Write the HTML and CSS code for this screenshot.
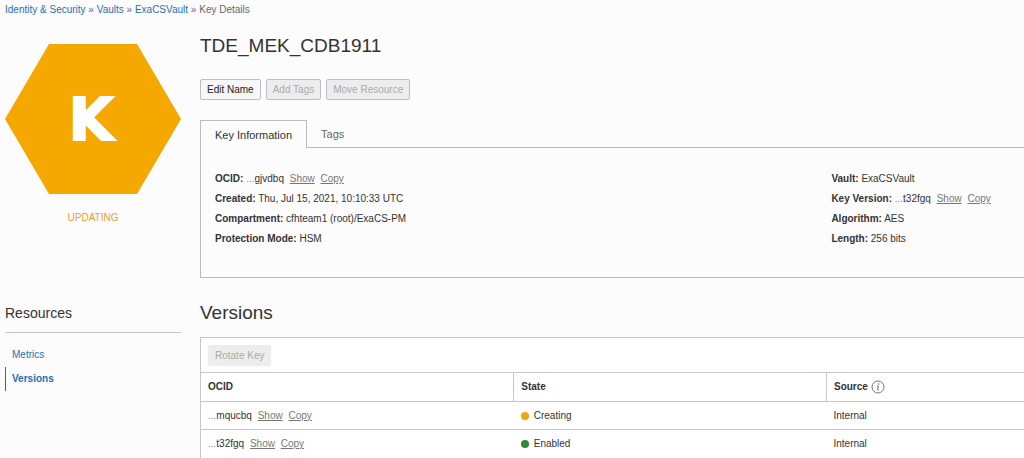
FILE: index.html
```
<!DOCTYPE html>
<html lang="en">
<head>
    <meta charset="UTF-8">
    <meta name="viewport" content="width=device-width, initial-scale=1.0">
    <title>Key Details</title>
    <link rel="stylesheet" href="styles.css">
</head>
<body>
    <nav class="breadcrumb">
        <a href="#">Identity &amp; Security</a> » <a href="#">Vaults</a> » <a href="#">ExaCSVault</a> » <span>Key Details</span>
    </nav>

    <div class="layout">
        <aside class="sidebar">
            <svg class="hexagon" viewBox="0 0 176 152">
                <polygon points="0,76 44,1 132,1 176,76 132,151 44,151" fill="#f5a800"/>
                <text class="hexagon-letter" x="86" y="97" text-anchor="middle">K</text>
            </svg>
            <div class="status">UPDATING</div>

            <h2 class="resources-title">Resources</h2>
            <ul class="resources">
                <li><a href="#">Metrics</a></li>
                <li class="active"><a href="#">Versions</a></li>
            </ul>
        </aside>

        <main class="content">
            <h1>TDE_MEK_CDB1911</h1>

            <div class="actions">
                <button type="button" class="btn">Edit Name</button>
                <button type="button" class="btn" disabled>Add Tags</button>
                <button type="button" class="btn" disabled>Move Resource</button>
            </div>

            <div class="tabs">
                <button type="button" class="tab selected">Key Information</button>
                <button type="button" class="tab">Tags</button>
            </div>
            <section class="panel">
                <div>
                    <p><b>OCID:</b> <span class="dots">...</span>gjvdbq <a href="#" class="mini">Show</a> <a href="#" class="mini">Copy</a></p>
                    <p><b>Created:</b> Thu, Jul 15, 2021, 10:10:33 UTC</p>
                    <p><b>Compartment:</b> cfhteam1 (root)/ExaCS-PM</p>
                    <p><b>Protection Mode:</b> HSM</p>
                </div>
                <div>
                    <p><b>Vault:</b> ExaCSVault</p>
                    <p><b>Key Version:</b> <span class="dots">...</span>t32fgq <a href="#" class="mini">Show</a> <a href="#" class="mini">Copy</a></p>
                    <p><b>Algorithm:</b> AES</p>
                    <p><b>Length:</b> 256 bits</p>
                </div>
            </section>

            <h2 class="versions-title">Versions</h2>
            <section class="versions">
                <div class="toolbar">
                    <button type="button" class="btn flat" disabled>Rotate Key</button>
                </div>
                <table>
                    <thead>
                        <tr>
                            <th class="col-wide">OCID</th>
                            <th class="col-wide">State</th>
                            <th>
                                <span class="with-icon">Source
                                    <svg class="info" viewBox="0 0 14 14">
                                        <circle cx="7" cy="7" r="6" fill="none" stroke="#777" stroke-width="1"/>
                                        <circle cx="7.6" cy="4" r="0.8" fill="#666"/>
                                        <path d="M6 6h1.4L6.5 9.8q0 .6 1.2 0" fill="none" stroke="#666" stroke-width="0.9"/>
                                    </svg>
                                </span>
                            </th>
                        </tr>
                    </thead>
                    <tbody>
                        <tr>
                            <td><span class="dots">...</span>mqucbq <a href="#" class="mini">Show</a> <a href="#" class="mini">Copy</a></td>
                            <td><span class="state creating">Creating</span></td>
                            <td>Internal</td>
                        </tr>
                        <tr>
                            <td><span class="dots">...</span>t32fgq <a href="#" class="mini">Show</a> <a href="#" class="mini">Copy</a></td>
                            <td><span class="state enabled">Enabled</span></td>
                            <td>Internal</td>
                        </tr>
                    </tbody>
                </table>
            </section>
        </main>
    </div>
</body>
</html>
```

FILE: styles.css
```
/* styles.css */
* {
    box-sizing: border-box;
}

body {
    margin: 0;
    padding-left: 5px;
    font-family: "Liberation Sans", Arial, sans-serif;
    font-size: 10px;
    line-height: 20px;
    color: #333;
    background-color: #fcfcfc;
}

h1, h2, p, ul {
    margin: 0;
    padding: 0;
    font-weight: normal;
}

a {
    color: #1f6fb8;
    text-decoration: none;
}

.breadcrumb {
    height: 20px;
    color: #666;
}

.layout {
    display: grid;
    grid-template-columns: 176px 1fr;
    gap: 19px;
}

/* sidebar */
.hexagon {
    display: block;
    width: 100%;
    margin-top: 23px;
}

.hexagon-letter {
    font-family: "DejaVu Sans", sans-serif;
    font-size: 58px;
    font-weight: bold;
    fill: #fff;
    stroke: #fff;
    stroke-width: 2px;
}

.status {
    margin-top: 13px;
    text-align: center;
    color: #eda02f;
}

.resources-title {
    margin-top: 75px;
    padding-bottom: 9px;
    border-bottom: 1px solid #c0c4cc;
    font-size: 14px;
}

.resources {
    margin-top: 10px;
    list-style: none;
}

.resources li {
    padding-left: 6px;
    border-left: 1px solid transparent;
    line-height: 24px;
}

.resources .active {
    border-left-color: #1f6fb8;
    font-weight: bold;
}

/* main column */
h1, .versions-title {
    font-size: 19px;
    line-height: 24px;
}

h1 {
    margin-top: 14px;
}

.actions {
    display: flex;
    gap: 5px;
    margin-top: 21px;
}

.btn {
    height: 21px;
    padding: 0 6px;
    border: 1px solid #bbbec4;
    border-radius: 2px;
    background-color: #f6f7f8;
    font: inherit;
    line-height: 18px;
    color: #222;
}

.btn:disabled {
    background-color: #ededee;
    color: #aaa;
}

.btn.flat {
    border-color: #ededee;
}

.tabs {
    display: flex;
    margin-top: 20px;
    border-bottom: 1px solid #bbb;
}

.tab {
    height: 27px;
    padding: 0 14px;
    border: 0;
    background: none;
    font: inherit;
    font-size: 11px;
    color: #666;
}

.tab.selected {
    height: 28px;
    margin-bottom: -1px;
    border: 1px solid #bbb;
    border-bottom: 0;
    background-color: #fcfcfc;
    color: #333;
}

.panel {
    display: grid;
    grid-template-columns: 16fr 5fr;
    padding: 21px 0 28px 14px;
    border: 1px solid #bbb;
    border-width: 0 0 1px 1px;
}

.dots {
    color: #888;
}

.mini {
    margin-left: 3px;
    color: #777;
    text-decoration: underline;
}

.versions-title {
    margin-top: 23px;
}

.versions {
    margin-top: 12px;
    border: 1px solid #c4c8c8;
    border-width: 1px 0 0 1px;
    background-color: #fff;
}

.toolbar {
    display: flex;
    padding: 7px 7px 6px;
}

table {
    width: 100%;
    table-layout: fixed;
    border-collapse: collapse;
}

th, td {
    height: 28px;
    padding: 0 7px;
    border-top: 1px solid #c4c8c8;
    text-align: left;
    line-height: 20px;
}

th {
    height: 29px;
}

th + th {
    border-left: 1px solid #c4c8c8;
}

.col-wide {
    width: 38%;
}

.with-icon {
    display: flex;
    align-items: center;
    gap: 3px;
}

.info {
    width: 14px;
    height: 14px;
}

.state {
    display: flex;
    align-items: center;
    gap: 5px;
}

.state::before {
    content: "";
    width: 8px;
    height: 8px;
    border-radius: 50%;
}

.creating::before {
    background-color: #f0a511;
}

.enabled::before {
    background-color: #2f8a3a;
}
```
